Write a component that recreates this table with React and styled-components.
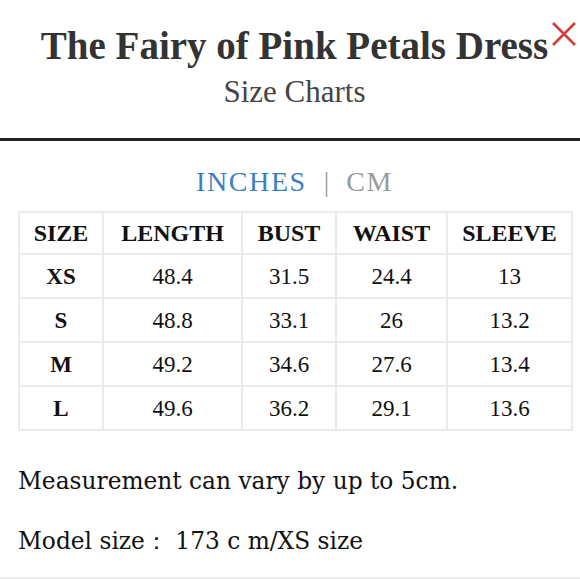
import React, { useState } from "react";
import styled, { createGlobalStyle } from "styled-components";

const GlobalStyle = createGlobalStyle`
  html, body {
    margin: 0;
    padding: 0;
    background: #ffffff;
  }
  body {
    font-family: "Liberation Serif", serif;
    color: #222;
  }
`;

const sizes = [
  { size: "XS", length: "48.4", bust: "31.5", waist: "24.4", sleeve: "13" },
  { size: "S", length: "48.8", bust: "33.1", waist: "26", sleeve: "13.2" },
  { size: "M", length: "49.2", bust: "34.6", waist: "27.6", sleeve: "13.4" },
  { size: "L", length: "49.6", bust: "36.2", waist: "29.1", sleeve: "13.6" },
];

const columns = [
  { key: "size", label: "SIZE", width: 84 },
  { key: "length", label: "LENGTH", width: 139 },
  { key: "bust", label: "BUST", width: 94 },
  { key: "waist", label: "WAIST", width: 111 },
  { key: "sleeve", label: "SLEEVE", width: 125 },
];

const App = () => {
  const [unit, setUnit] = useState("in");

  return (
    <>
      <GlobalStyle />
      <Modal>
        <Header>
          <Title>The Fairy of Pink Petals Dress</Title>
          <SubTitle>Size Charts</SubTitle>
          <CloseBtn aria-label="close">
            <svg width="26" height="26" viewBox="0 0 26 26">
              <path d="M2 2 L24 24 M24 2 L2 24" stroke="#d0403a" strokeWidth="2.6" fill="none" />
            </svg>
          </CloseBtn>
        </Header>
        <Divider />
        <Units>
          <UnitBtn active={unit === "in"} onClick={() => setUnit("in")}>INCHES</UnitBtn>
          <Sep>|</Sep>
          <UnitBtn active={unit === "cm"} onClick={() => setUnit("cm")}>CM</UnitBtn>
        </Units>
        <Table>
          <colgroup>
            {columns.map((c) => (
              <col key={c.key} style={{ width: c.width }} />
            ))}
          </colgroup>
          <thead>
            <tr>
              {columns.map((c) => (
                <Th key={c.key}>{c.label}</Th>
              ))}
            </tr>
          </thead>
          <tbody>
            {sizes.map((row) => (
              <tr key={row.size}>
                {columns.map((c) => (
                  <Td key={c.key} bold={c.key === "size"}>{row[c.key]}</Td>
                ))}
              </tr>
            ))}
          </tbody>
        </Table>
        <Note>Measurement can vary by up to 5cm.</Note>
        <Note>Model size： 173 c m/XS size</Note>
      </Modal>
    </>
  );
};

const Modal = styled.div`
  width: 580px;
  height: 579px;
  padding: 0 9px 0 18px;
  overflow: hidden;
  border-bottom: 2px solid #eeeeee;
  box-sizing: border-box;
`;

const Header = styled.div`
  position: relative;
  display: flex;
  flex-direction: column;
  align-items: center;
  padding: 24px 0 0 0;
  height: 114px;
  box-sizing: border-box;
`;

const Title = styled.h1`
  margin: 0;
  font-family: "Liberation Serif", serif;
  font-weight: 700;
  font-size: 39px;
  line-height: 44px;
  color: #333;
`;

const SubTitle = styled.h2`
  margin: 6px 0 0 0;
  font-family: "Liberation Serif", serif;
  font-weight: 400;
  font-size: 31px;
  line-height: 36px;
  color: #444;
`;

const CloseBtn = styled.button`
  position: absolute;
  top: 20px;
  right: -7px;
  width: 28px;
  height: 28px;
  padding: 0;
  border: none;
  background: none;
  display: flex;
  align-items: center;
  justify-content: center;
`;

const Divider = styled.div`
  margin: 24px -9px 0 -18px;
  height: 3px;
  background: #222;
`;

const Units = styled.div`
  display: flex;
  justify-content: center;
  align-items: center;
  gap: 17px;
  margin-top: 25px;
  height: 32px;
`;

const UnitBtn = styled.span`
  font-family: "Liberation Serif", serif;
  font-size: 28px;
  letter-spacing: 1.6px;
  color: ${(p) => (p.active ? "#3a80c4" : "#9a9a9a")};
  cursor: pointer;
`;

const Sep = styled.span`
  font-family: "Liberation Serif", serif;
  font-size: 27px;
  color: #999;
`;

const Table = styled.table`
  margin-top: 13px;
  width: 553px;
  border-collapse: collapse;
  table-layout: fixed;
  border: 2px solid #ebebeb;
`;

const Th = styled.th`
  height: 40px;
  padding: 0;
  border: 2px solid #ebebeb;
  font-family: "Liberation Serif", serif;
  font-size: 24px;
  font-weight: 700;
  color: #111;
  text-align: center;
`;

const Td = styled.td`
  height: 40px;
  padding: 2px 0 0 0;
  border: 2px solid #ebebeb;
  font-family: "Liberation Serif", serif;
  font-size: 23px;
  font-weight: ${(p) => (p.bold ? 700 : 400)};
  color: #111;
  text-align: center;
`;

const Note = styled.p`
  margin: 32px 0 0 0;
  font-family: "DejaVu Serif", serif;
  font-size: 23.3px;
  line-height: 28px;
  color: #111;

  &:first-of-type {
    margin-top: 36px;
  }
`;

export default App;
